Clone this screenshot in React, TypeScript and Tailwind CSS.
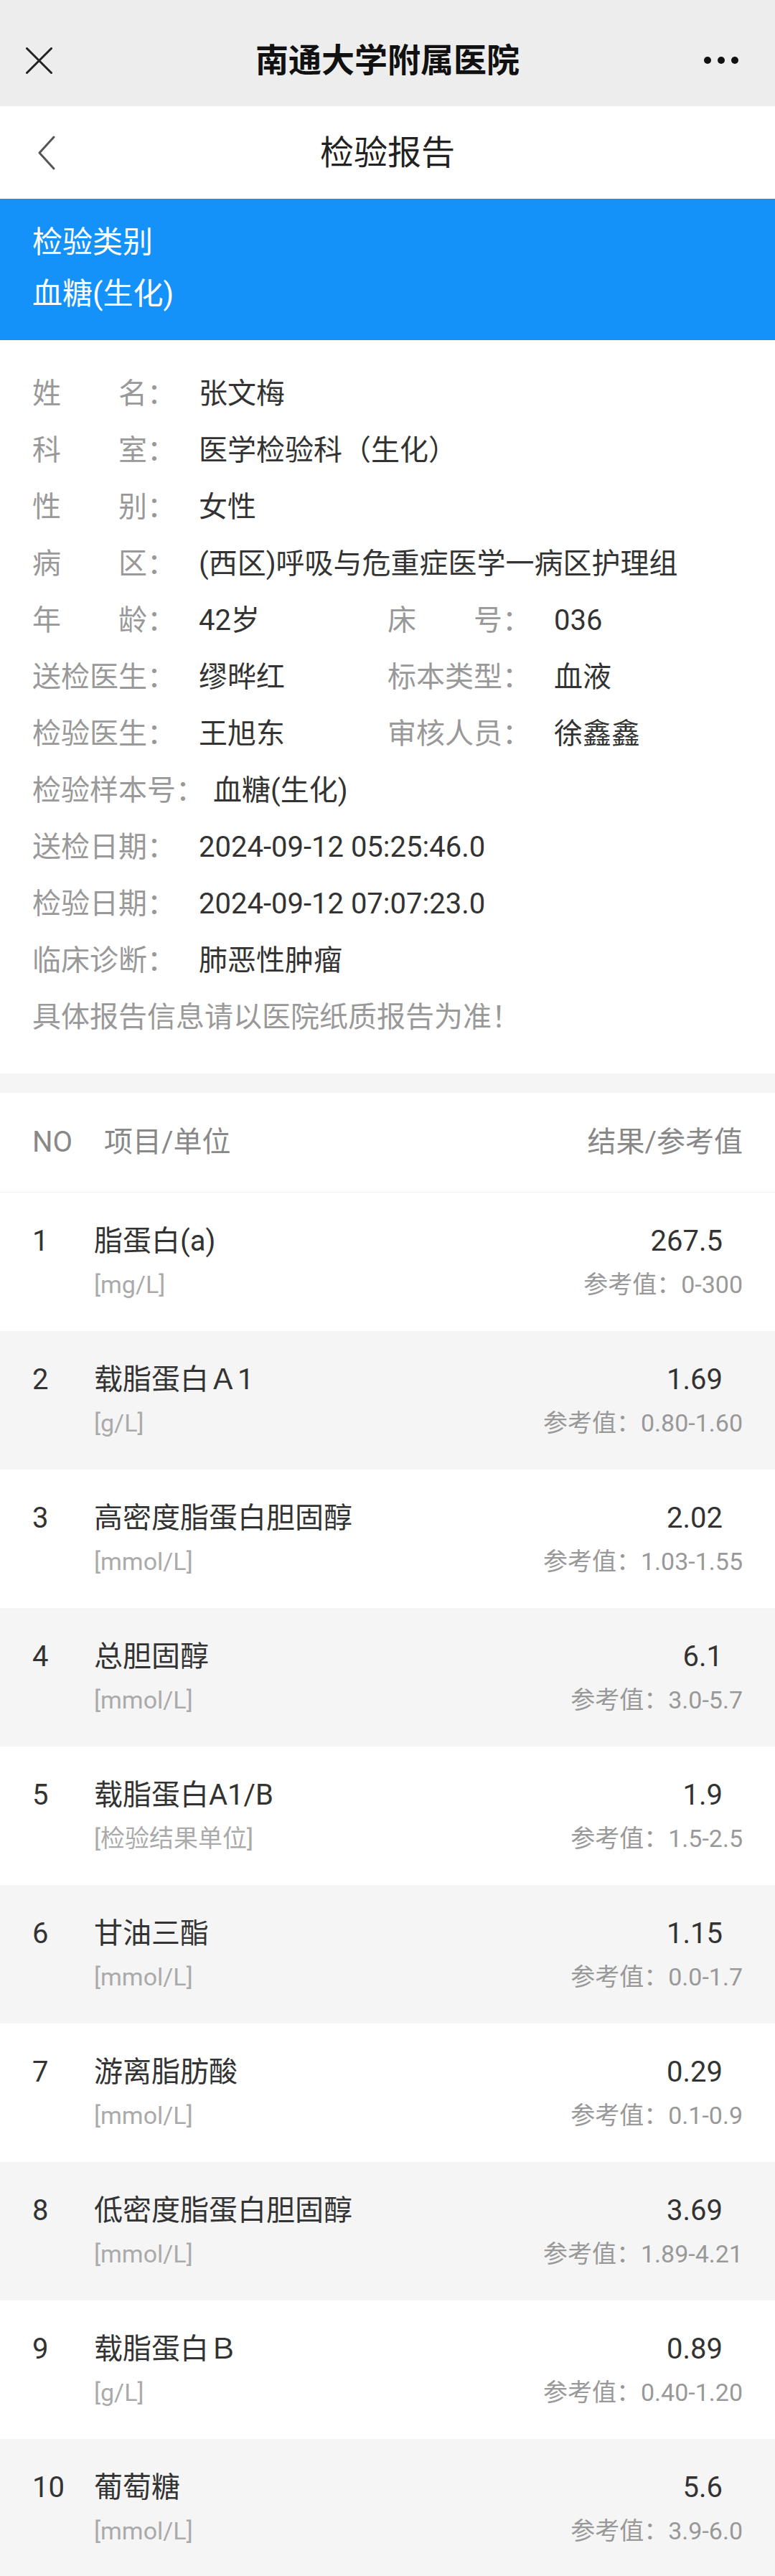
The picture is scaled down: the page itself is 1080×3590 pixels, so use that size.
import React from "react";

const FONT = { fontFamily: 'Roboto, "Noto Sans CJK SC", sans-serif' };

type Item = { no: number; name: string; unit: string; value: string; ref: string };

const items: Item[] = [
  { no: 1, name: "脂蛋白(a)", unit: "[mg/L]", value: "267.5", ref: "0-300" },
  { no: 2, name: "载脂蛋白Ａ1", unit: "[g/L]", value: "1.69", ref: "0.80-1.60" },
  { no: 3, name: "高密度脂蛋白胆固醇", unit: "[mmol/L]", value: "2.02", ref: "1.03-1.55" },
  { no: 4, name: "总胆固醇", unit: "[mmol/L]", value: "6.1", ref: "3.0-5.7" },
  { no: 5, name: "载脂蛋白A1/B", unit: "[检验结果单位]", value: "1.9", ref: "1.5-2.5" },
  { no: 6, name: "甘油三酯", unit: "[mmol/L]", value: "1.15", ref: "0.0-1.7" },
  { no: 7, name: "游离脂肪酸", unit: "[mmol/L]", value: "0.29", ref: "0.1-0.9" },
  { no: 8, name: "低密度脂蛋白胆固醇", unit: "[mmol/L]", value: "3.69", ref: "1.89-4.21" },
  { no: 9, name: "载脂蛋白Ｂ", unit: "[g/L]", value: "0.89", ref: "0.40-1.20" },
  { no: 10, name: "葡萄糖", unit: "[mmol/L]", value: "5.6", ref: "3.9-6.0" },
];

function Label({ text, justify }: { text: string; justify?: boolean }) {
  return (
    <div className="flex min-w-[232px] pr-[12px] text-[#999999] whitespace-nowrap">
      {justify ? (
        <span className="flex w-[160px] justify-between">
          {text.split("").map((c, i) => (
            <span key={i}>{c}</span>
          ))}
        </span>
      ) : (
        <span>{text}</span>
      )}
      <span>：</span>
    </div>
  );
}

function Field({ label, value, justify }: { label: string; value: string; justify?: boolean }) {
  return (
    <div className="flex items-center h-[79px]">
      <Label text={label} justify={justify} />
      <span className="text-[#333333] whitespace-nowrap">{value}</span>
    </div>
  );
}

export default function App() {
  return (
    <div className="w-[1080px] bg-white" style={FONT}>
      {/* WeChat title bar */}
      <div className="flex h-[148px] items-center bg-[#ededed] pt-[20px]">
        <div className="flex w-[140px] pl-[36px]">
          <svg width="37" height="37" viewBox="0 0 37 37">
            <path d="M1.5 1.5 L35.5 35.5 M35.5 1.5 L1.5 35.5" stroke="#222" strokeWidth="3" strokeLinecap="round" fill="none" />
          </svg>
        </div>
        <div className="flex-1 text-center text-[46px] font-bold text-[#111111] leading-none">南通大学附属医院</div>
        <div className="flex w-[140px] justify-end gap-[9px] pr-[51px]">
          <span className="h-[10px] w-[10px] rounded-full bg-[#111111]" />
          <span className="h-[10px] w-[10px] rounded-full bg-[#111111]" />
          <span className="h-[10px] w-[10px] rounded-full bg-[#111111]" />
        </div>
      </div>

      {/* Nav */}
      <div className="flex h-[129px] items-center bg-white">
        <div className="flex w-[140px] pl-[52px]">
          <svg width="26" height="48" viewBox="0 0 26 48">
            <path d="M23 2 L3 24 L23 46" stroke="#555" strokeWidth="3" fill="none" strokeLinecap="round" strokeLinejoin="round" />
          </svg>
        </div>
        <div className="flex-1 text-center text-[47px] text-[#222222] leading-none">检验报告</div>
        <div className="w-[140px]" />
      </div>

      {/* Blue category */}
      <div className="bg-[#1592f9] px-[45px] pt-[25px] pb-[28px] text-[42px] text-white">
        <div className="h-[72px] leading-[72px]">检验类别</div>
        <div className="h-[72px] leading-[72px]">血糖(生化)</div>
      </div>

      {/* Patient info */}
      <div className="px-[45px] pt-[35px] pb-[39px] text-[40px]">
        <Field label="姓名" value="张文梅" justify />
        <Field label="科室" value="医学检验科（生化）" justify />
        <Field label="性别" value="女性" justify />
        <Field label="病区" value="(西区)呼吸与危重症医学一病区护理组" justify />
        <div className="grid grid-cols-2">
          <Field label="年龄" value="42岁" justify />
          <Field label="床号" value="036" justify />
        </div>
        <div className="grid grid-cols-2">
          <Field label="送检医生" value="缪晔红" />
          <Field label="标本类型" value="血液" />
        </div>
        <div className="grid grid-cols-2">
          <Field label="检验医生" value="王旭东" />
          <Field label="审核人员" value="徐鑫鑫" />
        </div>
        <Field label="检验样本号" value="血糖(生化)" />
        <Field label="送检日期" value="2024-09-12 05:25:46.0" />
        <Field label="检验日期" value="2024-09-12 07:07:23.0" />
        <Field label="临床诊断" value="肺恶性肿瘤" />
        <div className="flex h-[79px] items-center text-[#999999]">具体报告信息请以医院纸质报告为准！</div>
      </div>

      <div className="h-[27px] bg-[#f5f5f5]" />

      {/* Table header */}
      <div className="flex h-[139px] items-center border-b border-[#f0f0f0] px-[45px] text-[40px] text-[#888888]">
        <span className="w-[100px]">NO</span>
        <span className="flex-1">项目/单位</span>
        <span>结果/参考值</span>
      </div>

      {/* Rows */}
      {items.map((it) => (
        <div
          key={it.no}
          className={`flex h-[193px] pl-[45px] pr-[45px] ${it.no % 2 === 0 ? "bg-[#f5f5f5]" : "bg-white"}`}
        >
          <div className="w-[86px] pt-[40px] text-[40px] leading-[56px] text-[#333333]">{it.no}</div>
          <div className="flex flex-1 flex-col pt-[40px]">
            <div className="h-[56px] text-[40px] leading-[56px] text-[#333333]">{it.name}</div>
            <div className="h-[64px] text-[34px] leading-[64px] text-[#aaaaaa]">{it.unit}</div>
          </div>
          <div className="flex flex-col items-end pt-[40px]">
            <div className="h-[56px] pr-[28px] text-[40px] leading-[56px] text-[#333333]">{it.value}</div>
            <div className="h-[64px] text-[34px] leading-[64px] text-[#999999] whitespace-nowrap">参考值：{it.ref}</div>
          </div>
        </div>
      ))}
    </div>
  );
}
